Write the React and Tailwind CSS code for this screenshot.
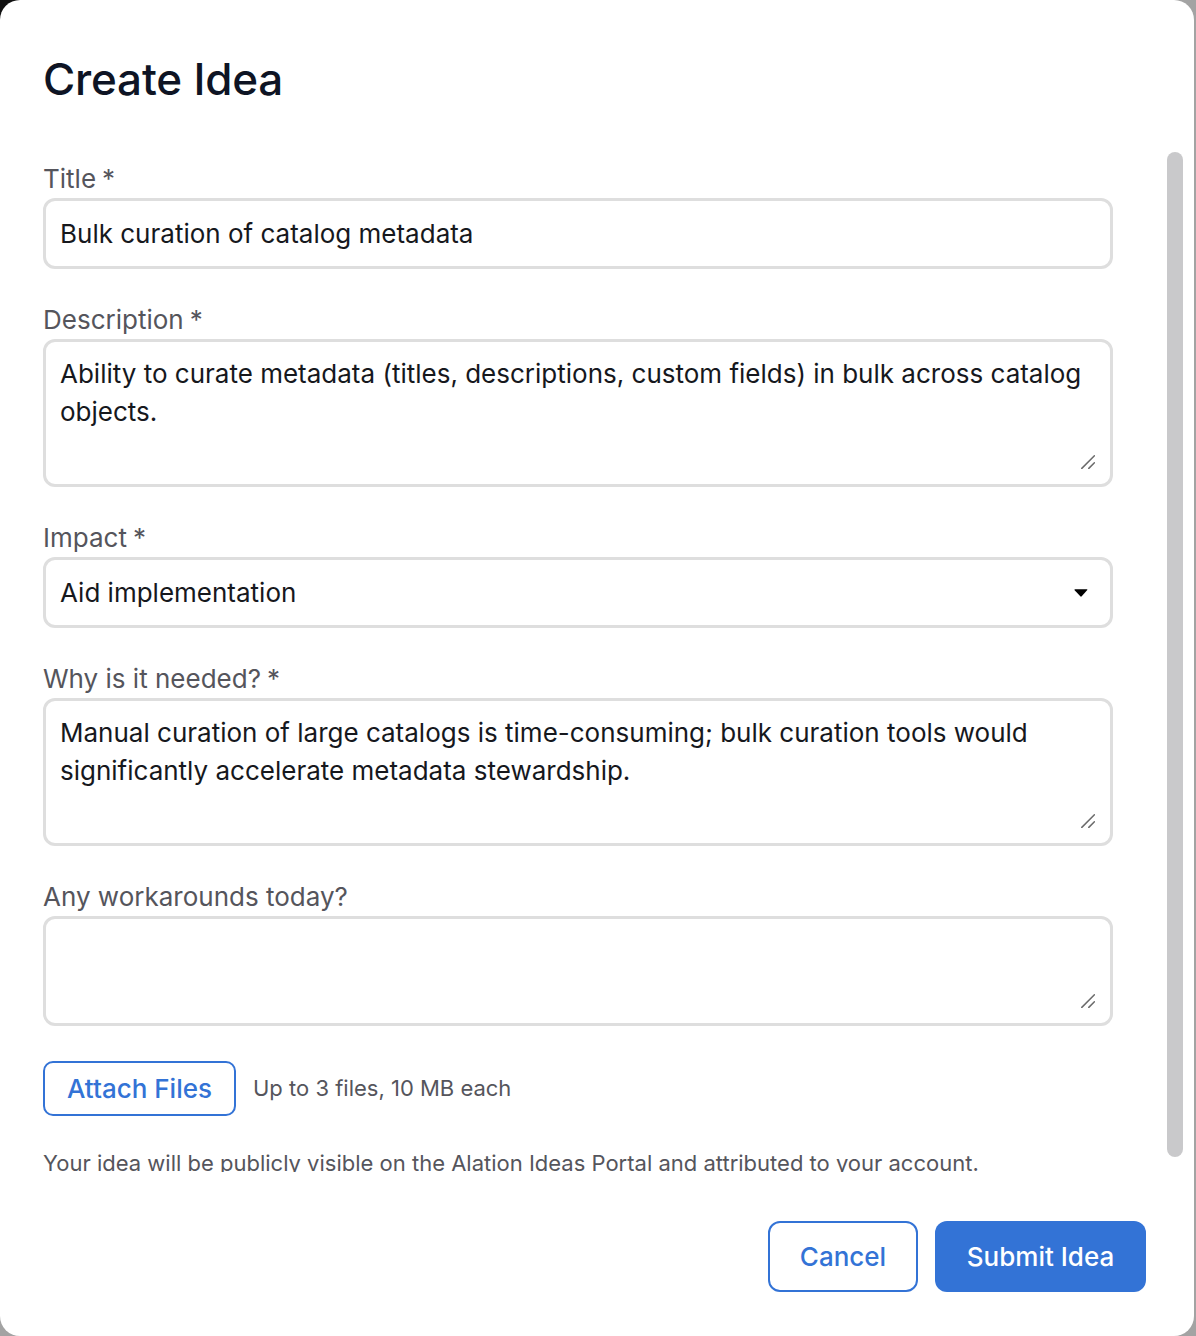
import React from 'react';

const Label = ({ children, required }) => (
  <label className="block text-[26px] leading-[30px] text-[#55555c] mb-[4px]">
    {children}
    {required && <span className="ml-[6px] text-[#55555c]">*</span>}
  </label>
);

const fieldBox =
  "w-full border-[3px] border-[#dedede] rounded-[12px] bg-white px-[14px] py-[13px] text-[26px] leading-[38px] text-[#16181d] outline-none";

// textarea with a drawn resize grip in the bottom-right corner
const TextArea = ({ height, value }) => (
  <div className="relative">
    <textarea
      readOnly
      defaultValue={value}
      className={`${fieldBox} ${height} block resize-none`}
    />
    <svg
      width="14"
      height="14"
      viewBox="0 0 14 14"
      className="absolute right-[18px] bottom-[18px] pointer-events-none"
    >
      <path d="M0.8 13.4 L13.4 0.8 M7.8 13.4 L13.4 7.8" stroke="#6b6b6b" strokeWidth="1.5" strokeLinecap="round" />
    </svg>
  </div>
);

const CreateIdea = () => {
  return (
    <div className="w-[1194px] h-[1336px] bg-white rounded-[20px] flex flex-col">
      {/* Header */}
      <div className="pt-[52px] pl-[43px] h-[140px]">
        <h1 className="text-[44px] leading-[54px] font-medium text-[#0e1424] tracking-[-0.2px]">
          Create Idea
        </h1>
      </div>

      {/* Scrollable body */}
      <div className="flex h-[1032px]">
        <div className="flex-1 overflow-hidden pl-[43px] pt-[24px]">
          <div className="w-[1070px]">
            <div className="mb-[36px]">
              <Label required>Title</Label>
              <input
                readOnly
                defaultValue="Bulk curation of catalog metadata"
                className={`${fieldBox} h-[71px] block`}
              />
            </div>

            <div className="mb-[36px]">
              <Label required>Description</Label>
              <TextArea
                height="h-[148px]"
                value="Ability to curate metadata (titles, descriptions, custom fields) in bulk across catalog objects."
              />
            </div>

            <div className="mb-[36px]">
              <Label required>Impact</Label>
              <div className={`${fieldBox} h-[71px] flex items-center justify-between`}>
                <span>Aid implementation</span>
                <svg width="14" height="8" viewBox="0 0 14 8" className="mr-[8px]">
                  <path d="M0.4 1.1 Q0.3 0.3 1.2 0.3 H12.8 Q13.7 0.3 13.3 1.1 L7.7 7.3 Q7 8 6.3 7.3 Z" fill="#000" />
                </svg>
              </div>
            </div>

            <div className="mb-[36px]">
              <Label required>Why is it needed?</Label>
              <TextArea
                height="h-[148px]"
                value="Manual curation of large catalogs is time-consuming; bulk curation tools would significantly accelerate metadata stewardship."
              />
            </div>

            <div className="mb-[35px]">
              <Label>Any workarounds today?</Label>
              <TextArea height="h-[110px]" value="" />
            </div>

            <div className="flex items-center gap-[17px]">
              <button className="h-[55px] w-[193px] border-2 border-[#3373d6] rounded-[10px] text-[26px] text-[#3373d6] font-medium">
                Attach Files
              </button>
              <span className="text-[22px] text-[#55555c]">Up to 3 files, 10 MB each</span>
            </div>

            <p className="mt-[31px] text-[22px] leading-[33px] text-[#55555c]">
              Your idea will be publicly visible on the Alation Ideas Portal and attributed to your account.
            </p>
          </div>
        </div>

        {/* Scrollbar */}
        <div className="w-[24px] mr-[7px] pt-[12px] pb-[15px] flex justify-center">
          <div className="w-[16px] h-full rounded-full bg-[#c9c9cb]" />
        </div>
      </div>

      {/* Footer */}
      <div className="flex justify-end gap-[17px] pt-[49px] pr-[48px]">
        <button className="h-[71px] w-[150px] border-2 border-[#3373d6] rounded-[12px] text-[26px] text-[#3373d6] font-medium bg-white">
          Cancel
        </button>
        <button className="h-[71px] w-[211px] rounded-[12px] text-[26px] text-white font-medium bg-[#3373d6]">
          Submit Idea
        </button>
      </div>
    </div>
  );
};

export default function App() {
  return (
    <div className="w-[1196px] h-[1336px] overflow-hidden font-['Inter',sans-serif] bg-[linear-gradient(135deg,#111_0%,#111_2%,#a3a3a3_2%,#a3a3a3_100%)]">
      <CreateIdea />
    </div>
  );
}
